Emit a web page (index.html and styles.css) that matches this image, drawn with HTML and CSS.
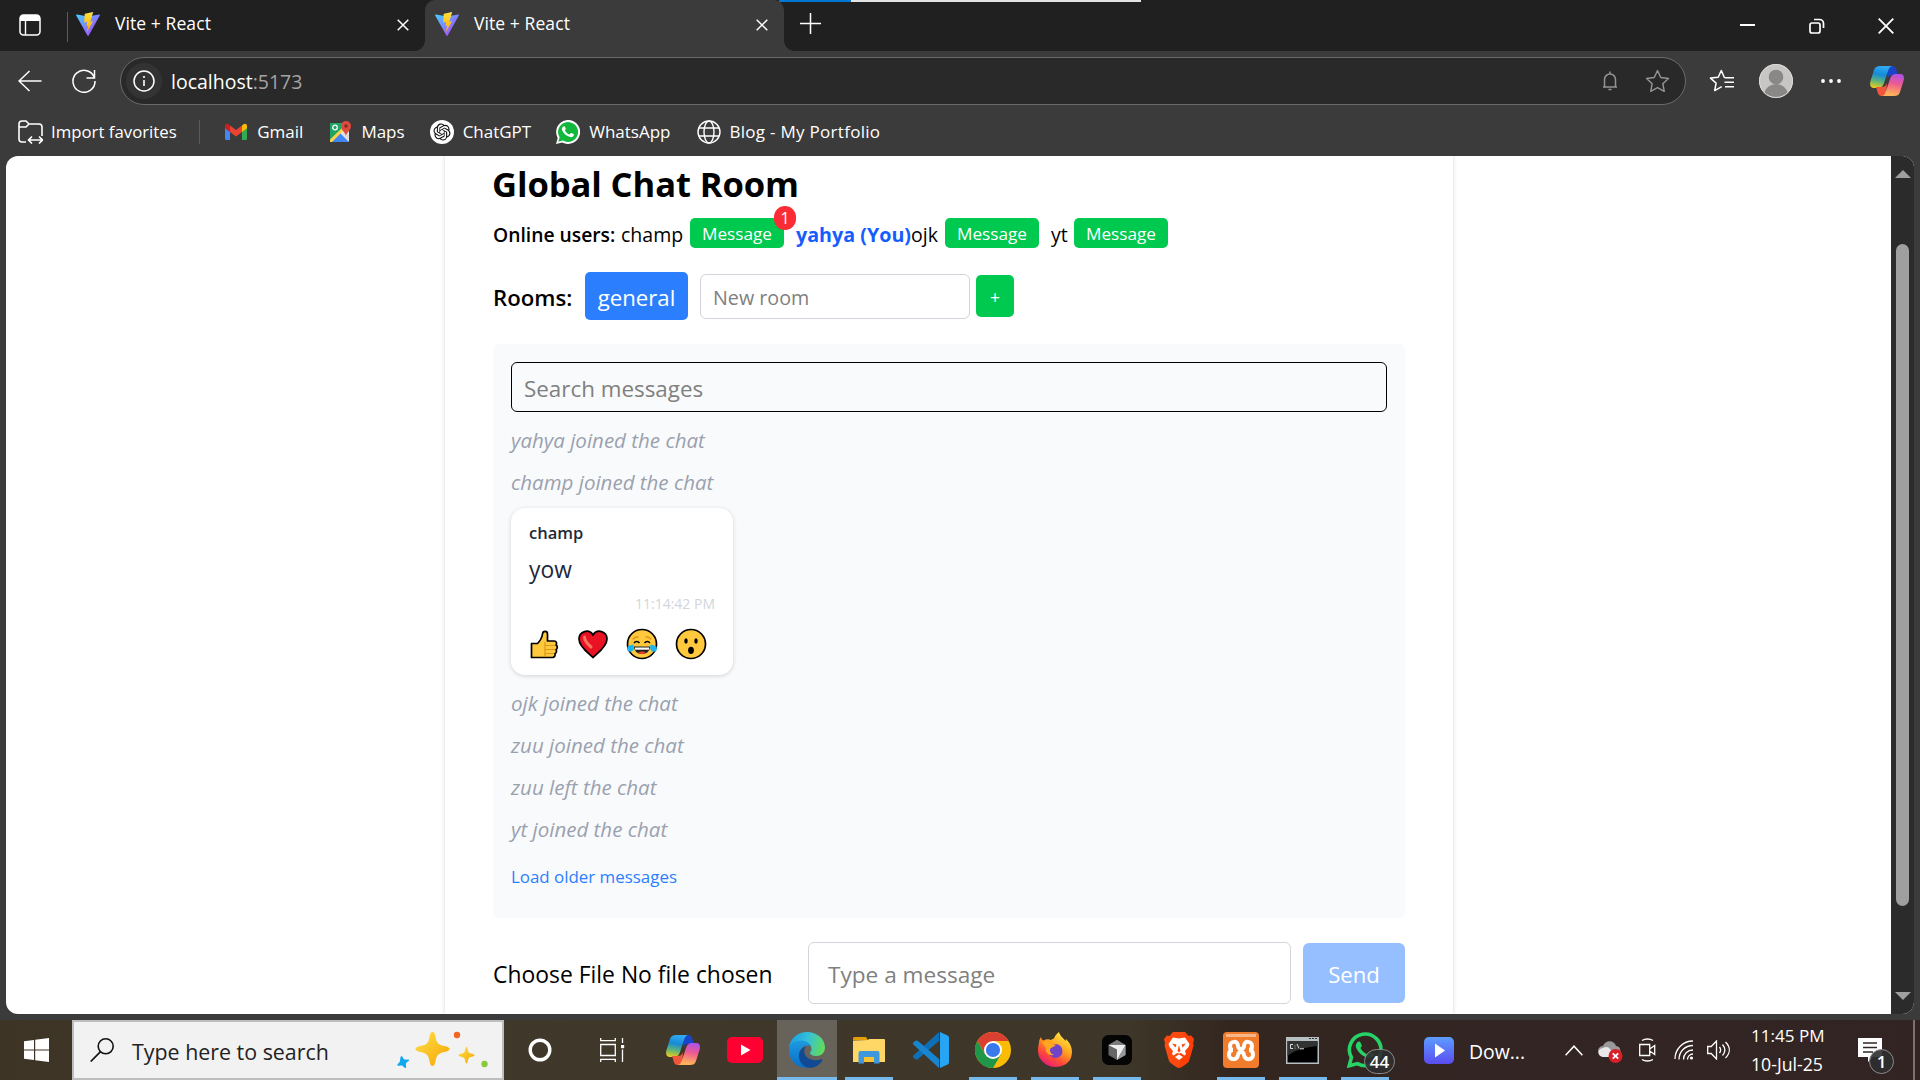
FILE: index.html
```
<!DOCTYPE html>
<html lang="en">
<head>
<meta charset="utf-8">
<title>Vite + React</title>
<link rel="stylesheet" href="styles.css">
</head>
<body>
<svg class="defs" aria-hidden="true">
  <defs>
    <linearGradient id="vite-a" x1="0" y1="0" x2="1" y2="1"><stop offset="0" stop-color="#41d1ff"/><stop offset="1" stop-color="#bd34fe"/></linearGradient>
    <linearGradient id="vite-b" x1="0" y1="0" x2="0" y2="1"><stop offset="0" stop-color="#ffea83"/><stop offset=".1" stop-color="#ffdd35"/><stop offset="1" stop-color="#ffa800"/></linearGradient>
    <linearGradient id="cop-a" x1=".3" y1="0" x2=".1" y2="1"><stop offset="0" stop-color="#2fa8f0"/><stop offset=".35" stop-color="#168ad8"/><stop offset=".65" stop-color="#5db37a"/><stop offset="1" stop-color="#f7cf10"/></linearGradient>
    <linearGradient id="cop-b" x1="0" y1="1" x2=".2" y2="0"><stop offset="0" stop-color="#a550f5"/><stop offset=".5" stop-color="#ee5a90"/><stop offset="1" stop-color="#ffb25a"/></linearGradient>
    <symbol id="vite" viewBox="0 0 24 24">
      <path d="M23.8 3.6 12.7 23.5a.7.7 0 0 1-1.3 0L.2 3.6a.7.7 0 0 1 .8-1l11 2 11-2a.7.7 0 0 1 .8 1z" fill="url(#vite-a)"/>
      <path d="M17.2.1 9 1.7a.4.4 0 0 0-.3.3l-.5 8.500 3-.6-.8 4.100 1.800-.5-1.500 7 6.300-11.200-2.700.5z" fill="url(#vite-b)"/>
    </symbol>
    <symbol id="copilot" viewBox="0 0 34 30">
      <path d="M18 0h4c3 0 4 2 4.600 4.500L28 9h-5c-3 0-5 1-6 4z" fill="#1a45c8"/>
      <path d="M10 0h13c-3 0-4 2-5 5l-4 12c-1 3.500-3 5-6 5H4c-4 0-4.500-3-3.500-7l3.500-11C5 1 7 0 10 0z" fill="url(#cop-a)"/>
      <g transform="rotate(180 17 15)">
        <path d="M18 0h4c3 0 4 2 4.600 4.500L28 9h-5c-3 0-5 1-6 4z" fill="#f0563c"/>
        <path d="M10 0h13c-3 0-4 2-5 5l-4 12c-1 3.500-3 5-6 5H4c-4 0-4.500-3-3.500-7l3.500-11C5 1 7 0 10 0z" fill="url(#cop-b)"/>
      </g>
    </symbol>
    <symbol id="close" viewBox="0 0 12 12"><path d="M.7.7l10.600 10.600M11.300.7.7 11.300" stroke="#fff" stroke-width="1.500" fill="none"/></symbol>
    <symbol id="star" viewBox="0 0 24 24"><path d="M12 1.500l3.100 6.700 7.400.9-5.400 5 1.400 7.300L12 17.800l-6.500 3.600 1.400-7.300-5.400-5 7.400-.9z" fill="none" stroke="currentColor" stroke-width="1.400" stroke-linejoin="round"/></symbol>
  </defs>
</svg>

<header class="tabbar">
  <svg class="tab-actions" width="22" height="22" viewBox="0 0 22 22"><rect x="1" y="1" width="20" height="20" rx="3.500" fill="none" stroke="#fff" stroke-width="1.500"/><path d="M1 7V4a3 3 0 0 1 3-3h14a3 3 0 0 1 3 3v3z" fill="#fff"/><path d="M6.500 7v14" stroke="#fff" stroke-width="1.400"/></svg>
  <div class="tab">
    <svg width="24" height="24"><use href="#vite"/></svg><span>Vite + React</span><svg class="x" width="12" height="12"><use href="#close"/></svg>
  </div>
  <div class="tab active">
    <svg width="24" height="24"><use href="#vite"/></svg><span>Vite + React</span><svg class="x" width="12" height="12"><use href="#close"/></svg>
  </div>
  <svg class="new-tab" width="21" height="21" viewBox="0 0 21 21"><path d="M10.500 0v21M0 10.500h21" stroke="#fff" stroke-width="1.500"/></svg>
  <div class="window-buttons">
    <svg width="16" height="16" viewBox="0 0 16 16"><path d="M0 7h15" stroke="#fff" stroke-width="2"/></svg>
    <svg width="16" height="16" viewBox="0 0 16 16"><rect x="1" y="5" width="10" height="10" rx="2" fill="none" stroke="#fff" stroke-width="1.700"/><path d="M5 1.500h5.500a4 4 0 0 1 4 4V10" fill="none" stroke="#fff" stroke-width="1.700"/></svg>
    <svg width="16" height="16" viewBox="0 0 16 16"><path d="M.7.7l14.600 14.600M15.300.7.7 15.300" stroke="#fff" stroke-width="1.800"/></svg>
  </div>
  <div class="share-strip"></div>
</header>

<nav class="toolbar">
  <svg class="back" width="24" height="22" viewBox="0 0 24 22"><path d="M23.500 11H1M11.500 1 1 11l10.500 10" fill="none" stroke="#fff" stroke-width="1.500"/></svg>
  <svg class="reload" width="24" height="24" viewBox="0 0 24 24"><path d="M22.500 9A11 11 0 1 0 23 12M22.500 1v8h-8" fill="none" stroke="#fff" stroke-width="1.500"/></svg>
  <div class="address">
    <div class="site-info"><svg width="22" height="22" viewBox="0 0 22 22"><circle cx="11" cy="11" r="10" fill="none" stroke="#fff" stroke-width="1.500"/><path d="M11 10v6" stroke="#fff" stroke-width="1.600"/><circle cx="11" cy="7" r="1.100" fill="#fff"/></svg></div>
    <span class="url">localhost<span class="port">:5173</span></span>
    <svg class="bell" width="16" height="20" viewBox="0 0 16 20"><path d="M1 16h14M2.500 16V8.500a5.500 5.500 0 0 1 11 0V16M8 3V.5M6.500 18.500h3" fill="none" stroke="#949494" stroke-width="1.500"/></svg>
    <svg class="fav" width="25" height="25"><use href="#star"/></svg>
  </div>
  <svg class="favorites" width="26" height="24" viewBox="0 0 26 24"><path d="M15.500 8.700 12.300 1.500 9.200 8.200l-7.700.9 5.600 5-1.400 7.500 7-3.900M15.500 8.700H25M15.500 13.200H25M16 17.700h9" fill="none" stroke="#fff" stroke-width="1.500" stroke-linejoin="round"/></svg>
  <svg class="avatar" width="34" height="34" viewBox="0 0 34 34"><circle cx="17" cy="17" r="17" fill="#c8c6c4"/><circle cx="17" cy="13" r="7.300" fill="#8a8886"/><path d="M5 29a12.500 12.500 0 0 1 24 0 17 17 0 0 1-24 0z" fill="#8a8886"/><circle cx="17" cy="17" r="16.500" fill="none" stroke="#dddcda"/></svg>
  <svg class="dots" width="20" height="4" viewBox="0 0 20 4"><circle cx="2" cy="2" r="1.900" fill="#fff"/><circle cx="10" cy="2" r="1.900" fill="#fff"/><circle cx="18" cy="2" r="1.900" fill="#fff"/></svg>
  <svg class="copilot" width="34" height="30"><use href="#copilot"/></svg>
</nav>

<nav class="bookmarks">
  <a class="bm"><svg width="25" height="24" viewBox="0 0 25 24"><path d="M8 22H4a3 3 0 0 1-3-3V4a3 3 0 0 1 3-3h4l3 3h10a3 3 0 0 1 3 3v9M1 7h7l3-3M11 20h13M14 16.500 10.500 20l3.500 3.500M21 16.500l3.500 3.500-3.500 3.500" fill="none" stroke="#fff" stroke-width="1.600"/></svg><span>Import favorites</span></a>
  <i class="sep"></i>
  <a class="bm"><svg width="24" height="18" viewBox="0 0 24 18"><path d="M1 3v12.500A1.500 1.500 0 0 0 2.500 17H6V7z" fill="#4285f4"/><path d="M23 3v12.500a1.500 1.500 0 0 1-1.500 1.500H18V7z" fill="#34a853"/><path d="M18 2.500V9l5-3.800V3c0-2-2.200-3-3.800-1.500z" fill="#fbbc04"/><path d="M6 9V2.500l6 4.500 6-4.500V9l-6 4.500z" fill="#ea4335"/><path d="M1 3v2.200L6 9V2.500L4.800 1.500C3.200 0 1 1 1 3z" fill="#c5221f"/></svg><span>Gmail</span></a>
  <a class="bm"><svg width="24" height="24" viewBox="0 0 24 24"><rect x="2" y="3" width="19" height="19" rx="1.500" fill="#e8e8e8"/><path d="M2 3h13v6L2 21z" fill="#1fa463"/><path d="M3 22l9-9 9 9z" fill="#4285f4"/><path d="M2 19.500 15 7l2 2L4 22H2z" fill="#ffd04b"/><path d="M14 14l7 7V8z" fill="#dcdcdc"/><circle cx="7" cy="7.500" r="2.300" fill="none" stroke="#fff" stroke-width="1.300"/><path d="M18 16c-.6-4-5-5.500-5-10a5 5 0 0 1 10 0c0 4.500-4.400 6-5 10z" fill="#dd4b3e"/><circle cx="18" cy="6" r="1.800" fill="#822d26"/></svg><span>Maps</span></a>
  <a class="bm"><svg width="24" height="24" viewBox="0 0 24 24"><circle cx="12" cy="12" r="12" fill="#fff"/><path transform="translate(3.500 3.500) scale(.708)" fill="#111" d="M22.2819 9.8211a5.9847 5.9847 0 0 0-.5157-4.9108 6.0462 6.0462 0 0 0-6.5098-2.9A6.0651 6.0651 0 0 0 4.9807 4.1818a5.9847 5.9847 0 0 0-3.9977 2.9 6.0462 6.0462 0 0 0 .7427 7.0966 5.98 5.98 0 0 0 .511 4.9107 6.051 6.051 0 0 0 6.5146 2.9001A5.9847 5.9847 0 0 0 13.2599 24a6.0557 6.0557 0 0 0 5.7718-4.2058 5.9894 5.9894 0 0 0 3.9977-2.9001 6.0557 6.0557 0 0 0-.7475-7.0729zm-9.022 12.6081a4.4755 4.4755 0 0 1-2.8764-1.0408l.1419-.0804 4.7783-2.7582a.7948.7948 0 0 0 .3927-.6813v-6.7369l2.02 1.1686a.071.071 0 0 1 .038.052v5.5826a4.504 4.504 0 0 1-4.4945 4.4944zm-9.6607-4.1254a4.4708 4.4708 0 0 1-.5346-3.0137l.142.0852 4.783 2.7582a.7712.7712 0 0 0 .7806 0l5.8428-3.3685v2.3324a.0804.0804 0 0 1-.0332.0615L9.74 19.9502a4.4992 4.4992 0 0 1-6.1408-1.6464zM2.3408 7.8956a4.485 4.485 0 0 1 2.3655-1.9728V11.6a.7664.7664 0 0 0 .3879.6765l5.8144 3.3543-2.0201 1.1685a.0757.0757 0 0 1-.071 0l-4.8303-2.7865A4.504 4.504 0 0 1 2.3408 7.872zm16.5963 3.8558L13.1038 8.364 15.1192 7.2a.0757.0757 0 0 1 .071 0l4.8303 2.7913a4.4944 4.4944 0 0 1-.6765 8.1042v-5.6772a.79.79 0 0 0-.407-.667zm2.0107-3.0231l-.142-.0852-4.7735-2.7818a.7759.7759 0 0 0-.7854 0L9.409 9.2297V6.8974a.0662.0662 0 0 1 .0284-.0615l4.8303-2.7866a4.4992 4.4992 0 0 1 6.6802 4.66zM8.3065 12.863l-2.02-1.1638a.0804.0804 0 0 1-.038-.0567V6.0742a4.4992 4.4992 0 0 1 7.3757-3.4537l-.142.0805L8.704 5.459a.7948.7948 0 0 0-.3927.6813zm1.0976-2.3654l2.602-1.4998 2.6069 1.4998v2.9994l-2.5974 1.4997-2.6067-1.4997Z"/></svg><span>ChatGPT</span></a>
  <a class="bm"><svg width="24" height="24" viewBox="0 0 24 24"><path d="M0 24l1.700-6.100A12 12 0 1 1 6.200 22.400z" fill="#fff"/><path d="M2.300 21.700l1.300-4.400A10 10 0 1 1 7 20.600z" fill="#12b83c"/><path d="M8 6.300c.5 0 .8 0 1 .6l.8 1.900c.1.300 0 .6-.9 1.600 1 2 2.500 3.300 4.600 4.200l1.200-1.400c.2-.3.5-.3.8-.1l2 1c.5.300.4.500.3 1.100-.3 1.500-2.200 2.200-3.500 1.900-4-1-6.800-3.500-8.200-6.800C5.500 8.600 6.700 6.300 8 6.300z" fill="#fff"/></svg><span>WhatsApp</span></a>
  <a class="bm blog"><svg width="24" height="24" viewBox="0 0 24 24"><g fill="none" stroke="#fff" stroke-width="1.400"><circle cx="12" cy="12" r="11"/><ellipse cx="12" cy="12" rx="5" ry="11"/><path d="M2 8h20M2 16h20"/></g></svg><span>Blog - My Portfolio</span></a>
</nav>

<div class="viewport">
  <main class="page">
    <section class="chat">
      <h1>Global Chat Room</h1>
      <div class="users">
        <b class="lead">Online users:</b>
        <span class="name n1">champ</span><button class="msg">Message<i class="badge">1</i></button>
        <span class="me">yahya (You)</span>
        <span class="name">ojk</span><button class="msg">Message</button>
        <span class="name n3">yt</span><button class="msg">Message</button>
      </div>
      <div class="rooms">
        <b>Rooms:</b>
        <button class="room">general</button>
        <div class="new-room">New room</div>
        <button class="add">+</button>
      </div>
      <div class="messages">
        <div class="search">Search messages</div>
        <p class="event">yahya joined the chat</p>
        <p class="event">champ joined the chat</p>
        <article class="card">
          <b>champ</b>
          <p>yow</p>
          <time>11:14:42 PM</time>
          <div class="reactions">
            <svg width="32" height="32" viewBox="0 0 32 32"><path d="M2.500 15.500h6c3-3 4.500-6 5-9.500.3-3.500 5-3.500 5 0V13h6.500c3 0 3 3 2 4 2 1 1.500 4 0 4.500 1 1.500.5 3.500-1 4 .5 2-.5 4-2.500 4h-21z" fill="#ffc83d" stroke="#000" stroke-width="1.700" stroke-linejoin="round"/><path d="M16 14v15M16.500 17.500h9.500M16.500 21.500h9.500M16.500 25.500H25" stroke="#d99a1c" stroke-width="1.200"/></svg>
            <svg width="32" height="32" viewBox="0 0 32 32"><path d="M16 29.500C13 26 2 19.500 2 11 2 3 12 .5 16 7c4-6.500 14-4 14 4 0 8.500-11 15-14 18.500z" fill="#e81224" stroke="#000" stroke-width="1.700"/><path d="M7.500 9c0 4 3 7 6.500 10" fill="none" stroke="#f4735c" stroke-width="3" stroke-linecap="round"/></svg>
            <svg width="32" height="32" viewBox="0 0 32 32"><circle cx="16" cy="16" r="14.500" fill="#ffc83d" stroke="#000" stroke-width="1.700"/><path d="M7 11.500c1-2 3-2.800 5.500-2.500M25 11.500c-1-2-3-2.800-5.500-2.500" fill="none" stroke="#d99a1c" stroke-width="1.600"/><path d="M8 15c1.500-2 4-2 5.500 0M18.500 15c1.500-2 4-2 5.500 0" fill="none" stroke="#000" stroke-width="1.500"/><path d="M8 18.500h16c0 10-16 10-16 0z" fill="#222"/><path d="M9 19.500h14v2.200H9z" fill="#fff"/><path d="M12 25c2-2 6-2 8 0-2.500 1.500-5.500 1.500-8 0z" fill="#e8402a"/><path d="M7.500 16.500c.7 4 .3 7-3 7.300C.5 24 0 19 3 17.800z" fill="#1ab4ee"/><path d="M24.500 16.500c-.7 4-.3 7 3 7.300 4 .2 4.500-4.800 1.500-6z" fill="#1ab4ee"/></svg>
            <svg width="32" height="32" viewBox="0 0 32 32"><circle cx="16" cy="16" r="14.500" fill="#ffc83d" stroke="#000" stroke-width="1.700"/><ellipse cx="11" cy="13" rx="1.700" ry="2.700"/><ellipse cx="21" cy="13" rx="1.700" ry="2.700"/><ellipse cx="16" cy="22.300" rx="2.900" ry="3.600"/></svg>
          </div>
        </article>
        <p class="event">ojk joined the chat</p>
        <p class="event">zuu joined the chat</p>
        <p class="event">zuu left the chat</p>
        <p class="event">yt joined the chat</p>
        <a class="older">Load older messages</a>
      </div>
      <div class="compose">
        <span class="file">Choose File No file chosen</span>
        <div class="draft">Type a message</div>
        <button class="send">Send</button>
      </div>
    </section>
  </main>
  <div class="scrollbar">
    <svg width="16" height="8" viewBox="0 0 16 8"><path d="M0 8 8 0l8 8z" fill="#9f9f9f"/></svg>
    <div class="thumb"></div>
    <svg width="16" height="8" viewBox="0 0 16 8"><path d="M0 0h16L8 8z" fill="#9f9f9f"/></svg>
  </div>
</div>

<footer class="taskbar">
  <div class="slot start"><svg width="25" height="24" viewBox="0 0 25 24"><path d="M0 3.300 10 1.900v9.600H0zM11.200 1.700 25 0v11.500H11.200zM0 12.500h10v9.600L0 20.700zM11.200 12.500H25V24l-13.800-1.700z" fill="#fff"/></svg></div>
  <div class="find">
    <svg width="24" height="24" viewBox="0 0 24 24"><circle cx="15.700" cy="8.300" r="7.500" fill="none" stroke="#111" stroke-width="1.600"/><path d="M10.300 13.800.7 23.500" stroke="#111" stroke-width="1.700"/></svg>
    <span>Type here to search</span>
    <svg class="sparkles" width="92" height="38" viewBox="0 0 92 38">
      <defs><linearGradient id="sp" x1="0" y1="0" x2="1" y2="1"><stop offset="0" stop-color="#ffe04a"/><stop offset="1" stop-color="#f5a500"/></linearGradient></defs>
      <path d="M36.500 1c2 0 2.500 2 3 5 1.300 6.500 2.500 7.500 9 9 3 .8 5 1.300 5 3s-2 2.300-5 3c-6.500 1.500-7.700 3-9 9-.6 3-1.200 5-3 5s-2.400-2-3-5c-1.300-6-2.500-7.500-9-9-3-.7-5-1.300-5-3s2-2.200 5-3c6.500-1.500 7.700-2.500 9-9 .6-3 1.200-5 3-5z" fill="url(#sp)"/>
      <path d="M70.500 16c1.500 0 1 5 3 6s5 .8 5 2.200-3 1.200-5 2.300-1.500 6-3 6-1-5-3-6-5-.9-5-2.300 3-1.200 5-2.200 1.500-6 3-6z" fill="url(#sp)"/>
      <path d="M5.500 25c1.500.5 1.500 3 3 3.500s4-.5 4.500.5-2.500 2-3 3.500.8 4-.2 4.500-2.500-2-4-2.500-4 .8-4.500-.3 2-2 2.500-3.700S4.300 25 5.500 25z" fill="#10a9f0"/>
      <circle cx="61" cy="4" r="3.200" fill="#f26522"/><circle cx="88.500" cy="33" r="3.200" fill="#8dc63f"/>
    </svg>
  </div>
  <div class="slot wide"><svg width="24" height="24" viewBox="0 0 24 24"><circle cx="12" cy="12" r="9.800" fill="none" stroke="#fff" stroke-width="3.400"/></svg></div>
  <div class="slot wide"><svg width="25" height="24" viewBox="0 0 25 24"><path d="M.7 0v2.700h14.600V0M.7 24v-2.700h14.600V24M.7 6.500h14.600v11H.7zM22.500 0v5M22.500 11.500V24" fill="none" stroke="#fff" stroke-width="1.300"/><path d="M21 7h3.200v3.200H21z" fill="#fff"/></svg></div>
  <div class="apps">
    <div class="slot"><svg width="34" height="30"><use href="#copilot"/></svg></div>
    <div class="slot"><svg width="36" height="26" viewBox="0 0 36 26"><rect width="36" height="26" rx="5" fill="#ff0033"/><path d="M14 7.500 23.500 13 14 18.500z" fill="#fff"/></svg></div>
    <div class="slot current"><svg width="36" height="36" viewBox="0 0 36 36">
      <defs><linearGradient id="ed-a" x1="0" y1=".3" x2="1" y2=".5"><stop offset="0" stop-color="#1a9de0"/><stop offset=".5" stop-color="#35c1d8"/><stop offset="1" stop-color="#62dc5a"/></linearGradient><linearGradient id="ed-b" x1="0" y1="0" x2="0" y2="1"><stop offset="0" stop-color="#1c9be0"/><stop offset="1" stop-color="#0a6cc8"/></linearGradient></defs>
      <path d="M0 16C1 6 9 0 18 0c10 0 18 7 18 15.500 0 5-4 8.500-8.500 8.500-4 0-6.500-1.500-6.500-3 0-1 1.500-1.500 1.500-4 0-4-4.500-8-10-8C6.500 9 2 12 0 16z" fill="url(#ed-a)"/>
      <path d="M0 18c0-6 5.500-9.500 11.500-9.500 5 0 9 2.500 10.500 5.500-7-2-12 3-12 9 0 6 4 11 10 12.700C9 37 0 29 0 18z" fill="url(#ed-b)"/>
      <path d="M17 14.200C12 16 9.500 20 10 25c.7 6 5 10.500 10.500 10.800 6 .1 10.500-3.300 12.800-7.300.5-1-.3-1.700-1.300-1.200C24 30 14.500 26 15.300 18.500c.1-1.700.7-3 1.700-4.300z" fill="#114a94"/></svg></div>
    <div class="slot open"><svg width="32" height="27" viewBox="0 0 32 27"><path d="M0 1.500A1.500 1.500 0 0 1 1.500 0H13l2 3H0z" fill="#e3a008"/><path d="M0 3.500 15 3l1-1h15a1 1 0 0 1 1 1v22H0z" fill="#ffd766"/><path d="M5.500 26V16a2 2 0 0 1 2-2h17a2 2 0 0 1 2 2v10.500H21V20H11v6.500H5.500z" fill="#3f97dd"/><path d="M11 20h10v5H11z" fill="#fbc230"/></svg></div>
    <div class="slot"><svg width="36" height="36" viewBox="0 0 36 36"><path d="M26 0v9L5 27c-1 .8-2 .8-3 0L.6 25.700c-.8-.8-.8-1.700 0-2.500z" fill="#0f6fb5"/><path d="M26 36v-9L5 9c-1-.8-2-.8-3 0L.6 10.300c-.8.8-.8 1.700 0 2.500z" fill="#1785cf"/><path d="M27 0l7.500 3.500c1 .5 1.500 1.200 1.500 2.200v24.600c0 1-.5 1.700-1.500 2.200L27 36z" fill="#25a5f3"/></svg></div>
    <div class="slot open"><svg width="36" height="36" viewBox="0 0 36 36"><circle cx="18" cy="18" r="18" fill="#fbbc05"/><path d="M18 9h15.600A18 18 0 0 0 2.400 9L10.200 22z" fill="#db3f32"/><path d="M2.400 9A18 18 0 0 0 18 36l7.800-13.500L10.200 22.500z" fill="#1f9648"/><circle cx="18" cy="18" r="9" fill="#fff"/><circle cx="18" cy="18" r="7.100" fill="#3879ec"/></svg></div>
    <div class="slot open"><svg width="36" height="36" viewBox="0 0 36 36"><defs><linearGradient id="ff" x1=".8" y1="0" x2=".2" y2="1"><stop offset="0" stop-color="#fff14a"/><stop offset=".4" stop-color="#ffa51e"/><stop offset=".7" stop-color="#ff4a38"/><stop offset="1" stop-color="#e01585"/></linearGradient></defs><path d="M2 11c0-2 .5-4 2-6 .3 2 1 3 2.500 3.500C9 7 12 7 14 8c1-1 2-1.500 3-1.500C17.500 4 20 1.500 22 0c1 4 4 5.500 6.500 9l.5-2c5 5 7 10.500 5.500 17C33 31 26 35 18 35S1 28.500 1 19c0-3 .4-6 1-8z" fill="url(#ff)"/><circle cx="18.500" cy="19" r="7" fill="#7043c8"/><path d="M5 10c4-2 7 0 9 2l5 .8c-1.500 2.200-4.500 2.200-6 4.200-.5 3 1 5 4 6-6 1-9-3-8-7z" fill="#ffa722"/></svg></div>
    <div class="slot open"><svg width="30" height="30" viewBox="0 0 30 30"><rect width="30" height="30" rx="6.500" fill="#050505"/><path d="M15 5l8.500 5v10L15 25l-8.500-5V10z" fill="#666"/><path d="M6.500 10 15 5l8.500 5z" fill="#7c7c7c"/><path d="M6.500 10h17L15 25V14.500z" fill="#eee"/><path d="M23.500 20 15 25l8.500-15z" fill="#999"/></svg></div>
    <div class="slot"><svg width="30" height="36" viewBox="0 0 30 36"><path d="M9 0h12l3.500 4 2.500-.5L30 7l-1 4.500.5 2L25 29c-1 2-8 7-10 7s-9-5-10-7L.5 13.500l.5-2L0 7l3-3.500 2.500.5z" fill="#fb4a10"/><path d="M21 0l3.500 4 2.500-.5L30 7l-1 4.500.5 2L25 29c-1 2-8 7-10 7z" fill="#ff3300" opacity=".5"/><path d="M9 5.500l6 1 6-1 4.500 6.500-1 3-3.500 4 1 3-1.500 1.500-3.500-2.500-2 .5-2-.5-3.500 2.500L8 22l1-3-3.500-4-1-3z" fill="#fff"/><path d="M15 22.500l4 2.500-4 3-4-3z" fill="#fff"/><path d="M8 11.500l4.500 1-1 3zM22 11.500l-4.500 1 1 3zM15 13l1.500 6-1.500 1.500-1.500-1.500z" fill="#fb4a10"/></svg></div>
    <div class="slot open"><svg width="36" height="36" viewBox="0 0 36 36"><rect width="36" height="36" rx="4" fill="#f07c2c"/><path d="M3 2h30v3H3z" fill="#f9b68a"/><path d="M15 14c0-6-8-5-8 0 0 2.500 1 4 3 4-3 0-4 2-4 5 0 5 8 6 9 0 .5-4 5.500-4 6 0 1 6 9 5 9 0 0-3-1-5-4-5 2 0 3-1.500 3-4 0-5-8-6-8 0 0 4-6 4-6 0z" fill="none" stroke="#fff" stroke-width="4"/></svg></div>
    <div class="slot open"><svg class="cmd" width="33" height="27" viewBox="0 0 33 27"><rect width="33" height="27" fill="#b9c0c4"/><path d="M1.500 4h30v21.500h-30z" fill="#000"/><path d="M1.500 4h30v5C20 10 8 13 1.500 19z" fill="#333"/><path d="M23 1.500h2M26 1.500h2M29 1.500h2" stroke="#333"/><path d="M7 7.500H4.500v4H7M9 8.500v.8M9 10.700v.8M11 7l2 4.500M14 11.800h4" fill="none" stroke="#ddd"/></svg></div>
    <div class="slot open"><svg width="36" height="36" viewBox="0 0 36 36"><path d="M2.200 33.800l2.200-8.300A15.800 15.800 0 1 1 10.500 31.600z" fill="none" stroke="#25d366" stroke-width="3.600"/><path d="M12 9.500c.7 0 1.200.1 1.500.9l1.300 3c.2.500 0 1-1.400 2.500 1.500 2.800 3.900 5 7 6.300l1.700-2c.4-.5.8-.5 1.300-.3l3.100 1.500c.8.400.7.800.5 1.700-.5 2.200-3.400 3.400-5.400 3-6-1.500-10.300-5.300-12.500-10.300-1-3 1-6.300 2.900-6.300z" fill="#25d366"/></svg><span class="count pill">44</span></div>
  </div>
  <div class="media"><svg width="30" height="27" viewBox="0 0 30 27"><defs><linearGradient id="pl" x1="0" y1="0" x2="0" y2="1"><stop offset="0" stop-color="#5c9dff"/><stop offset="1" stop-color="#5b4cf0"/></linearGradient></defs><rect width="30" height="27" rx="5" fill="url(#pl)"/><path d="M11 6.500 21 13.500 11 20.500z" fill="#fff"/></svg><span>Dow...</span></div>
  <div class="tray">
    <svg width="18" height="11" viewBox="0 0 18 11"><path d="M.6 10.200 9 1.200l8.400 9" fill="none" stroke="#fff" stroke-width="1.500"/></svg>
    <svg class="cloud" width="25" height="24" viewBox="0 0 25 24"><path d="M5 17a4.800 4.800 0 0 1 0-10C7 1 16 .5 18 7c4 .5 5 3 4 10z" fill="#999"/><path d="M5 18C-1 18-1 9 5 9c3-2 6-1 7 1l5 8z" fill="#e8e8e8"/><circle cx="17.500" cy="17" r="7" fill="#d81f2a"/><path d="M14.800 14.300l5.400 5.400M20.200 14.300l-5.400 5.400" stroke="#fff" stroke-width="1.800"/></svg>
    <svg class="cam" width="17" height="24" viewBox="0 0 17 24"><path d="M3 2.500C6 .5 11 .5 14 2.500M3 21.500c3 2 8 2 11 0M.7 6.500h10v11H.7zM10.700 11l5-3.500v9l-5-3.500" fill="none" stroke="#fff" stroke-width="1.300"/></svg>
    <svg class="wifi" width="20" height="20" viewBox="0 0 20 20"><path d="M1 19C1 9 9 1 19 1M5 19.500C5 11.500 11 5.500 19 5.500M9.500 19.500c0-5.500 4-9.500 9.500-9.500M13.500 19.500c0-3 2.500-5.500 5.500-5.500" fill="none" stroke="#fff" stroke-width="1.300"/><circle cx="17.500" cy="18" r="1.600" fill="#fff"/></svg>
    <svg class="vol" width="23" height="20" viewBox="0 0 23 20"><path d="M.7 6.500h3.500L9.500 1v18l-5.300-5.500H.7zM12.500 7c1.500 2 1.500 4 0 6M15.500 4.500c3 3.500 3 7.500 0 11M18.500 2c5 5 5 11 0 16" fill="none" stroke="#fff" stroke-width="1.300"/></svg>
  </div>
  <div class="clock"><span>11:45 PM</span><span class="date">10-Jul-25</span></div>
  <div class="notify"><svg width="24" height="25" viewBox="0 0 24 25"><path d="M0 0h24v19h-9l-5 5v-5H0z" fill="#fff"/><path d="M5 5h14M5 9.500h14M5 14h10" stroke="#332623" stroke-width="1.300"/></svg><span class="count">1</span></div>
  <i class="peek"></i>
</footer>
</body>
</html>
```
FILE: styles.css
```
* { box-sizing: border-box; }
body {
  margin: 0;
  width: 1920px;
  height: 1080px;
  overflow: hidden;
  display: flex;
  flex-direction: column;
  background: #3b3b3b;
  color: #fff;
  font-family: "Open Sans", "Noto Sans", sans-serif;
  white-space: nowrap;
}
svg { display: block; flex: none; }
.defs { position: absolute; width: 0; height: 0; }
button { border: 0; padding: 0; color: #fff; font-family: inherit; }
p, h1 { margin: 0; }

/* tab strip */
.tabbar { position: relative; height: 51px; flex: none; display: flex; background: #202020; }
.tab-actions { margin: 14px 25px 0 19px; }
.tab { position: relative; display: flex; align-items: flex-start; width: 359px; padding: 12px 0 0 10px; font-size: 17.500px; letter-spacing: .08px; line-height: 24px; }
.tab:not(.active)::before { content: ""; position: absolute; left: 1px; top: 12px; width: 1px; height: 30px; background: #5c5c5c; }
.tab span { margin: -1px 0 0 15px; width: 96px; }
.tab .x { margin: 7px 16px 0 auto; }
.tab.active { background: #3b3b3b; border-radius: 10px 10px 0 0; }
.tab.active::before, .tab.active::after { content: ""; position: absolute; bottom: 0; width: 10px; height: 10px; }
.tab.active::before { left: -10px; background: radial-gradient(circle at 0 0, transparent 9.500px, #3b3b3b 10px); }
.tab.active::after { right: -10px; background: radial-gradient(circle at 100% 0, transparent 9.500px, #3b3b3b 10px); }
.new-tab { margin: 13px 0 0 16px; }
.window-buttons { display: flex; gap: 53px; margin: 18px 26px 0 auto; }
.share-strip { position: absolute; left: 779px; top: 0; width: 362px; height: 2px; background: linear-gradient(90deg, #0078d4 72px, #e4e4e4 72px); }

/* address row */
.toolbar { display: flex; align-items: center; height: 60px; flex: none; padding-left: 18px; }
.reload { margin-left: 30px; }
.address { display: flex; align-items: center; width: 1566px; height: 48px; margin: 0 23px 0 24px; padding: 0 15px 0 5px; border: 1.500px solid #6a6a6a; border-radius: 24px; background: #292929; }
.site-info { display: grid; place-items: center; width: 36px; height: 36px; border-radius: 50%; background: #333; }
.url { margin-left: 9px; padding-top: 1px; font-size: 19.500px; line-height: 28px; }
.port { color: #a3a3a3; }
.bell { margin-left: auto; margin-right: 27px; }
.bell, .fav { color: #949494; }
.avatar { margin-left: 24px; }
.dots { margin-left: 28px; }
.copilot { margin-left: 29px; }

/* bookmarks */
.bookmarks { display: flex; align-items: center; gap: 25px; height: 45px; flex: none; padding: 0 0 4px 18px; font-size: 17px; }
.bm { display: flex; align-items: center; gap: 9px; height: 24px; line-height: 24px; }
.bm:first-child { gap: 8px; font-size: 16.800px; margin-right: -2.500px; }
.sep { width: 1px; height: 24px; margin-right: -1px; background: #5a5a5a; }
.blog { margin-left: 1px; letter-spacing: .28px; }

/* browser viewport */
.viewport { display: flex; height: 858px; flex: none; margin: 0 6px 6px; border-radius: 12px; overflow: hidden; background: #fff; color: #000; }
.page { width: 1885px; padding-left: 439px; }
.chat { width: 1008px; height: 858px; padding: 2px 48px 0; box-shadow: 0 0 4px rgba(0, 0, 0, .17); }
h1 { margin-left: -1px; font-size: 34.600px; letter-spacing: -.1px; line-height: 51px; }
.users { display: flex; align-items: center; height: 30px; margin-top: 9px; font-size: 19.500px; line-height: 26px; }
.users > b, .users > span { padding-top: 3px; }
.lead { width: 128px; font-weight: 600; font-size: 19.300px; }
.name { width: 34px; }
.n1 { width: 69px; }
.n3 { width: 23px; margin-left: 12px; }
.msg { position: relative; width: 94px; height: 30px; padding-top: 1px; border-radius: 5px; background: #00c950; font-size: 17.200px; line-height: 29px; }
.badge { position: absolute; right: -12px; top: -12px; width: 22px; height: 24px; border-radius: 12px; background: #fb2c36; font-style: normal; font-size: 16px; line-height: 24px; }
.me { width: 115px; margin-left: 12px; color: #155dfc; font-weight: 700; font-size: 19.700px; }
.rooms { display: flex; align-items: center; height: 48px; margin-top: 24px; font-size: 22.200px; }
.rooms b { width: 92px; padding-top: 2px; font-weight: 600; }
.room { width: 103px; height: 48px; padding-top: 2px; border-radius: 5px; background: #2b7fff; font-size: 22.200px; }
.new-room { width: 270px; height: 45px; margin: 0 6px 0 12px; padding: 2px 0 0 12px; border: 1.500px solid #d1d5dc; border-radius: 6px; color: #808080; font-size: 19.700px; line-height: 42px; }
.add { width: 38px; height: 42px; padding-top: 2px; border-radius: 5px; background: #00c950; font-size: 17.500px; }

.messages { display: flex; flex-direction: column; align-items: flex-start; height: 574px; margin-top: 24px; padding: 18px; border-radius: 6px; background: #f9fafb; }
.search { width: 100%; height: 50px; margin-bottom: 7px; padding: 2px 0 0 12px; border: 1px solid #000; border-radius: 6px; color: #808080; font-size: 22.400px; line-height: 47px; }
.event { color: #99a1af; font-size: 20.500px; font-style: italic; line-height: 42px; }
.card { width: 222px; height: 167px; margin: 5px 0 7px; padding: 14px 18px 0; border-radius: 14px; background: #fff; color: #1e2939; box-shadow: 0 1px 4px rgba(0, 0, 0, .16); }
.card b { display: block; font-size: 16.500px; font-weight: 600; line-height: 22px; }
.card p { margin-top: 11px; font-size: 22.800px; line-height: 30px; }
.card time { display: block; margin-top: 9px; color: #d1d5dc; font-size: 14px; line-height: 20px; text-align: right; }
.reactions { display: flex; gap: 17px; margin-top: 14px; margin-left: -1px; }
.reactions svg:first-child { margin: 0 -1px 0 1px; }
.older { margin-top: 13px; color: #2b7fff; font-size: 16.900px; line-height: 27px; }

.compose { display: flex; align-items: center; height: 62px; margin-top: 24px; font-size: 22.900px; }
.file { width: 315px; padding-top: 2px; }
.draft { width: 483px; height: 62px; padding: 3px 0 0 19px; border: 1.500px solid #d1d5dc; border-radius: 6px; color: #808080; font-size: 22.600px; line-height: 58px; }
.send { width: 102px; height: 60px; margin-left: 12px; padding-top: 1px; border-radius: 6px; background: #96bfff; font-size: 22.100px; font-weight: 500; }

.scrollbar { display: flex; flex-direction: column; align-items: center; width: 23px; padding: 14px 0; background: #2b2b2b; }
.thumb { width: 13px; height: 662px; margin: 66px 0 86px; border-radius: 7px; background: #9f9f9f; }

/* taskbar */
.taskbar { display: flex; height: 60px; flex: none; background: linear-gradient(90deg, #3d3425, #40382a 400px, #3e3628 1130px, #33261f 1230px, #332523 1500px, #322422); }
.slot { position: relative; display: grid; place-items: center; width: 60px; height: 60px; }
.slot .cmd { margin-right: 2px; }
.slot.start, .slot.wide { width: 72px; }
.find { display: flex; align-items: center; width: 432px; padding: 0 17px 0 16px; border: 2px solid #bdbdbd; background: #f2f2f2; color: #222; font-size: 21.400px; }
.find span { margin-left: 18px; padding-top: 2px; }
.sparkles { margin-left: auto; margin-right: -3px; }
.apps { display: flex; gap: 2px; margin-left: 5px; }
.current { background: #67635a; }
.current::after, .open::after { content: ""; position: absolute; bottom: 0; left: 6px; width: 48px; height: 3px; background: #76b9ed; }
.current::after { left: 0; width: 60px; }
.count { position: absolute; width: 25px; height: 25px; border: 1px solid #8a8a8a; border-radius: 13px; background: rgba(45, 45, 45, .9); font-size: 17px; font-weight: 600; line-height: 23px; text-align: center; }
.pill { left: 29px; top: 29px; width: 31px; }
.media { display: flex; align-items: center; width: 132px; margin-left: 29px; font-size: 19.400px; }
.media span { margin-left: 15px; padding-top: 3px; }
.tray { display: flex; align-items: center; margin-left: 9px; }
.tray .cloud { margin-left: 15px; margin-top: 2px; }
.tray .cam { margin-left: 16px; }
.tray .wifi { margin-left: 18px; }
.tray .vol { margin-left: 13px; }
.clock { display: flex; flex-direction: column; width: 75px; margin-left: 21px; padding-top: 2px; font-size: 17.100px; line-height: 28px; }
.date { font-size: 17.700px; }
.notify { position: relative; margin: 18px 0 0 32px; }
.notify .count { left: 11px; top: 11px; }
.peek { width: 2px; height: 60px; margin-left: 31px; background: #7c7371; }
```
